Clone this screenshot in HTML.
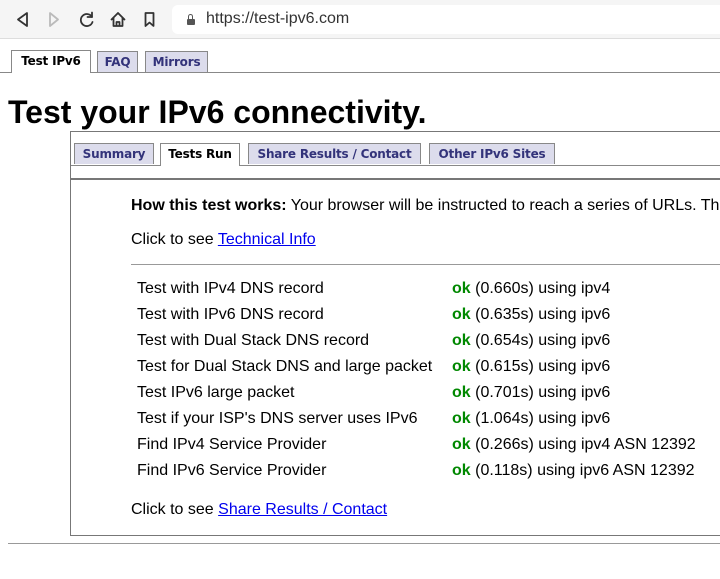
<!DOCTYPE html>
<html><head><style>
body{margin:0;width:720px;height:579px;overflow:hidden;background:#fff;font-family:"Liberation Sans",Arial,sans-serif;position:relative}
.a{position:absolute}
.tab{position:absolute;height:21px;border:1px solid #888;border-bottom:none;background:#dcdcec;color:#33337a;font:bold 12px "DejaVu Sans",Verdana,sans-serif;line-height:21px;text-align:center;box-sizing:border-box;white-space:nowrap;overflow:hidden;letter-spacing:-0.2px}
.tab.on{background:#fff;color:#000;height:23px}
.t{position:absolute;font-size:16px;color:#000;white-space:nowrap}
.ok{color:#080;font-weight:bold}
a{color:#00e;text-decoration:underline}
</style></head><body>
<div class="a" style="left:0;top:0;width:720px;height:38px;background:#f5f5f5;border-bottom:1px solid #ddd"></div>
<div class="a" style="left:172px;top:5px;width:560px;height:29px;background:#fff;border-radius:6px"></div>
<svg class="a" style="left:0;top:0" width="170" height="38" viewBox="0 0 170 38" fill="none" stroke-width="1.8" stroke-linejoin="round" stroke-linecap="round">
<path d="M27 13 L18 19.5 L27 26 Z" stroke="#333"/>
<path d="M50 13 L58 19.5 L50 26 Z" stroke="#bbb"/>
<path d="M92 17 A6 6 0 1 0 92.5 22" stroke="#333"/><path d="M92 12.5 V17 H87.5" stroke="#333"/>
<path d="M111.5 19.5 L118 13 L124.5 19.5 M113.5 17.5 V26 H122.5 V17.5 M116.5 26 V22 H119.5 V26" stroke="#333"/>
<path d="M145.5 13 H153.5 V26 L149.5 22.5 L145.5 26 Z" stroke="#333"/>
</svg>
<div class="a" style="left:187px;top:19px;width:8px;height:6px;background:#555;border-radius:1px"></div>
<div class="a" style="left:188px;top:14px;width:3px;height:5px;border:1.5px solid #555;border-bottom:none;border-radius:3px 3px 0 0"></div>
<div class="t" style="left:206px;top:10px;font-size:16px;color:#333">https://test-ipv6.com</div>

<div class="a" style="left:0;top:72px;width:720px;height:1px;background:#888"></div>
<div class="tab on" style="left:11px;top:50px;width:80px">Test IPv6</div>
<div class="tab" style="left:97px;top:51px;width:41px">FAQ</div>
<div class="tab" style="left:145px;top:51px;width:63px">Mirrors</div>

<div class="t" style="left:8px;top:94px;font-size:32px;font-weight:bold">Test your IPv6 connectivity.</div>

<div class="a" style="left:70px;top:131px;width:660px;height:403px;border:1px solid #777;border-right:none"></div>
<div class="a" style="left:71px;top:165px;width:660px;height:1px;background:#888"></div>
<div class="tab" style="left:74px;top:143px;width:80px">Summary</div>
<div class="tab on" style="left:160px;top:143px;width:80px">Tests Run</div>
<div class="tab" style="left:248px;top:143px;width:173px">Share Results / Contact</div>
<div class="tab" style="left:429px;top:143px;width:126px">Other IPv6 Sites</div>
<div class="a" style="left:71px;top:178px;width:660px;height:2px;background:#777"></div>

<div class="t" style="left:131px;top:197px"><b>How this test works:</b> Your browser will be instructed to reach a series of URLs. The</div>
<div class="t" style="left:131px;top:231px">Click to see <a>Technical Info</a></div>
<div class="a" style="left:131px;top:264px;width:600px;height:1px;background:#999"></div>

<div class="t" style="left:137px;top:280px">Test with IPv4 DNS record</div><div class="t" style="left:452px;top:280px"><span class="ok">ok</span> (0.660s) using ipv4</div>
<div class="t" style="left:137px;top:306px">Test with IPv6 DNS record</div><div class="t" style="left:452px;top:306px"><span class="ok">ok</span> (0.635s) using ipv6</div>
<div class="t" style="left:137px;top:332px">Test with Dual Stack DNS record</div><div class="t" style="left:452px;top:332px"><span class="ok">ok</span> (0.654s) using ipv6</div>
<div class="t" style="left:137px;top:358px">Test for Dual Stack DNS and large packet</div><div class="t" style="left:452px;top:358px"><span class="ok">ok</span> (0.615s) using ipv6</div>
<div class="t" style="left:137px;top:384px">Test IPv6 large packet</div><div class="t" style="left:452px;top:384px"><span class="ok">ok</span> (0.701s) using ipv6</div>
<div class="t" style="left:137px;top:410px">Test if your ISP's DNS server uses IPv6</div><div class="t" style="left:452px;top:410px"><span class="ok">ok</span> (1.064s) using ipv6</div>
<div class="t" style="left:137px;top:436px">Find IPv4 Service Provider</div><div class="t" style="left:452px;top:436px"><span class="ok">ok</span> (0.266s) using ipv4 ASN 12392</div>
<div class="t" style="left:137px;top:462px">Find IPv6 Service Provider</div><div class="t" style="left:452px;top:462px"><span class="ok">ok</span> (0.118s) using ipv6 ASN 12392</div>

<div class="t" style="left:131px;top:501px">Click to see <a>Share Results / Contact</a></div>
<div class="a" style="left:8px;top:543px;width:712px;height:1px;background:#999"></div>
</body></html>
